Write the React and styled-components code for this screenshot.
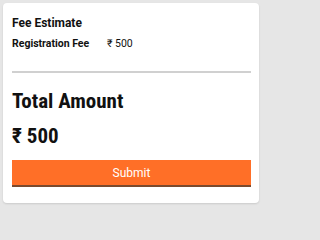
import React from "react";
import styled, { createGlobalStyle } from "styled-components";

const GlobalStyle = createGlobalStyle`
  html, body {
    margin: 0;
    padding: 0;
    background: #e6e6e6;
    font-family: Roboto, "Liberation Sans", sans-serif;
    color: #111;
  }
`;

const Page = styled.div`
  padding: 3px;
  height: 210px;
  box-sizing: border-box;
`;

const Card = styled.div`
  width: 256px;
  height: 200px;
  box-sizing: border-box;
  background: #fff;
  border-radius: 4px;
  box-shadow: 0 1px 2px rgba(0, 0, 0, 0.12);
  padding: 12px 8px 0 9px;
  display: flex;
  flex-direction: column;
`;

const Heading = styled.div`
  font-size: 12px;
  font-weight: 700;
  line-height: 16px;
`;

const FeeRow = styled.div`
  display: flex;
  align-items: center;
  margin-top: 6px;
  font-size: 10.5px;
  line-height: 14px;
`;

const FeeLabel = styled.span`
  font-weight: 700;
  width: 95px;
`;

const FeeValue = styled.span`
  font-weight: 400;
`;

const Divider = styled.hr`
  border: none;
  height: 2px;
  background: #d0d0d0;
  margin: 20px 0 0;
`;

const Big = styled.div`
  font-family: "Roboto Condensed", Roboto, "Liberation Sans Narrow", sans-serif;
  font-stretch: condensed;
  font-size: 21px;
  font-weight: 700;
  line-height: 24px;
  margin-top: ${(p) => p.$gap}px;
`;

const SubmitButton = styled.button`
  margin-top: 12px;
  height: 27px;
  width: 100%;
  border: none;
  border-bottom: 2px solid #7a4a2e;
  background: #ff6f27;
  color: #fff;
  font-family: Roboto, "Liberation Sans", sans-serif;
  font-size: 12px;
  cursor: pointer;
`;

const App = () => {
  return (
    <>
      <GlobalStyle />
      <Page>
        <Card>
          <Heading>Fee Estimate</Heading>
          <FeeRow>
            <FeeLabel>Registration Fee</FeeLabel>
            <FeeValue>₹ 500</FeeValue>
          </FeeRow>
          <Divider />
          <Big $gap={16}>Total Amount</Big>
          <Big $gap={11}>₹ 500</Big>
          <SubmitButton>Submit</SubmitButton>
        </Card>
      </Page>
    </>
  );
};

export default App;
